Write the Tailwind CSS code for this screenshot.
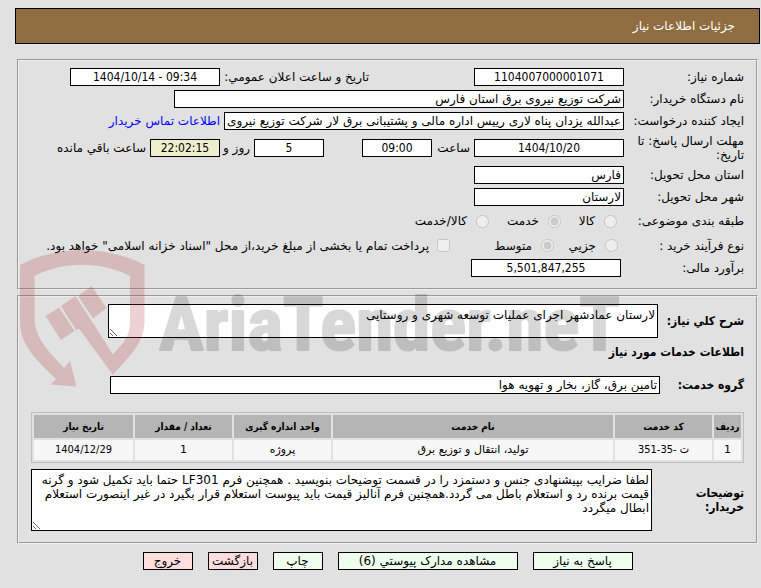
<!DOCTYPE html>
<html lang="fa" dir="rtl">

<head>
    <meta charset="UTF-8">
    <meta name="viewport" content="width=device-width, initial-scale=1.0">
    <title>جزئیات اطلاعات نیاز</title>
    <script src="https://cdn.jsdelivr.net/npm/@tailwindcss/browser@4"></script>
</head>

<body class="relative min-h-screen bg-[#e1e1e1] pt-2 pr-px pl-[15px] font-['DejaVu_Sans',sans-serif] text-[12px] leading-[14px] text-black">
    <!-- Title bar -->
    <header class="flex h-9 items-center border border-black bg-[#8f6d40] px-6 text-white">
        <h1>جزئیات اطلاعات نیاز</h1>
    </header>

    <main class="mt-[15px] mr-[2px] ml-[2px]">
        <!-- Need details -->
        <fieldset class="flex flex-col gap-1 border-2 border-[#eeeeee] pt-[7px] pr-3 pb-[11px] pl-6 [border-style:groove]">
            <div class="flex items-center">
                <label for="needNo" class="w-[120px] shrink-0">شماره نیاز:</label>
                <input id="needNo" type="text" readonly value="1104007000001071" class="h-[18px] w-[150px] border border-black bg-white px-0.5 text-center font-['DejaVu_Sans_Condensed',sans-serif]">
                <label for="announce" class="ms-[105px] w-[149px] shrink-0">تاریخ و ساعت اعلان عمومي:</label>
                <input id="announce" type="text" dir="ltr" readonly value="1404/10/14 - 09:34" class="h-[18px] w-[150px] border border-black bg-white px-0.5 text-center font-['DejaVu_Sans_Condensed',sans-serif]">
            </div>
            <div class="flex items-center">
                <label for="buyer" class="w-[120px] shrink-0">نام دستگاه خریدار:</label>
                <input id="buyer" type="text" readonly value="شرکت توزیع نیروی برق استان فارس" class="h-[18px] w-[450px] border border-black bg-white px-0.5">
            </div>
            <div class="flex items-center">
                <label for="creator" class="w-[120px] shrink-0">ایجاد کننده درخواست:</label>
                <input id="creator" type="text" readonly value="عبدالله یزدان پناه لاری رییس اداره مالی و پشتیبانی برق لار شرکت توزیع نیروی برق استان فارس" class="h-[18px] w-[400px] border border-black bg-white px-0.5">
                <a href="#" class="ms-1 whitespace-nowrap text-[#0000ff]">اطلاعات تماس خریدار</a>
            </div>
            <div class="flex h-7 items-center">
                <label for="deadline" class="w-[120px] shrink-0 pe-2">مهلت ارسال پاسخ: تا تاریخ:</label>
                <input id="deadline" type="text" readonly value="1404/10/20" class="h-[18px] w-[150px] border border-black bg-white px-0.5 text-center font-['DejaVu_Sans_Condensed',sans-serif]">
                <label for="deadlineHour" class="w-[42px] shrink-0 ps-1">ساعت</label>
                <input id="deadlineHour" type="text" readonly value="09:00" class="h-[18px] w-[70px] border border-black bg-white px-0.5 text-center font-['DejaVu_Sans_Condensed',sans-serif]">
                <input id="daysLeft" type="text" readonly value="5" class="ms-[38px] h-[18px] w-[70px] border border-black bg-white px-0.5 text-center font-['DejaVu_Sans_Condensed',sans-serif]">
                <label for="daysLeft" class="w-[34px] shrink-0 ps-1">روز و</label>
                <input id="timeLeft" type="text" readonly value="22:02:15" class="h-[18px] w-[70px] border border-black bg-[#eeeecc] px-0.5 text-center font-['DejaVu_Sans_Condensed',sans-serif]">
                <label for="timeLeft" class="ms-1 whitespace-nowrap">ساعت باقي مانده</label>
            </div>
            <div class="flex items-center">
                <label for="province" class="w-[120px] shrink-0">استان محل تحویل:</label>
                <input id="province" type="text" readonly value="فارس" class="h-[18px] w-[150px] border border-black bg-white px-0.5">
            </div>
            <div class="flex items-center">
                <label for="city" class="w-[120px] shrink-0">شهر محل تحویل:</label>
                <input id="city" type="text" readonly value="لارستان" class="h-[18px] w-[150px] border border-black bg-white px-0.5">
            </div>
            <div class="flex h-[22px] items-center">
                <span class="w-[127px] shrink-0">طبقه بندی موضوعی:</span>
                <div class="w-14 shrink-0"><label class="flex items-center gap-[9px]"><input type="radio" name="category" disabled class="size-[13px]">کالا</label></div>
                <div class="w-[72px] shrink-0"><label class="flex items-center gap-[9px]"><input type="radio" name="category" disabled checked class="size-[13px]">خدمت</label></div>
                <label class="flex items-center gap-[9px] whitespace-nowrap"><input type="radio" name="category" disabled class="size-[13px]">کالا/خدمت</label>
            </div>
            <div class="flex h-[19px] items-center">
                <span class="w-[126px] shrink-0">نوع فرآیند خرید :</span>
                <div class="w-16 shrink-0"><label class="flex items-center gap-[9px]"><input type="radio" name="process" disabled class="size-[13px]">جزیي</label></div>
                <div class="w-[104px] shrink-0"><label class="flex items-center gap-[9px]"><input type="radio" name="process" disabled checked class="size-[13px]">متوسط</label></div>
                <label class="flex items-center gap-2 whitespace-nowrap"><input type="checkbox" disabled class="size-[13px]">پرداخت تمام یا بخشی از مبلغ خرید،از محل "اسناد خزانه اسلامی" خواهد بود.</label>
            </div>
            <div class="flex items-center">
                <label for="estimate" class="w-[123px] shrink-0">برآورد مالی:</label>
                <input id="estimate" type="text" readonly value="5,501,847,255" class="h-[18px] w-[150px] border border-black bg-white px-0.5 text-center font-['DejaVu_Sans_Condensed',sans-serif]">
            </div>
        </fieldset>

        <!-- Description and services -->
        <fieldset class="mt-[5px] border-2 border-[#eeeeee] pt-[7px] pr-3 pb-[11px] pl-3 [border-style:groove]">
            <div class="flex items-center">
                <label for="summary" class="w-[86px] shrink-0 font-['DejaVu_Sans_Condensed',sans-serif] font-bold">شرح كلي نياز:</label>
                <textarea id="summary" readonly class="h-[34px] w-[550px] resize overflow-hidden border border-black bg-white px-0.5 py-[3px]">لارستان عمادشهر اجرای عملیات توسعه شهری و روستایی</textarea>
            </div>
            <h2 class="mt-[7px] font-['DejaVu_Sans_Condensed',sans-serif] font-bold">اطلاعات خدمات مورد نیاز</h2>
            <div class="mt-[17px] flex items-center">
                <label for="group" class="w-[84px] shrink-0 font-['DejaVu_Sans_Condensed',sans-serif] font-bold">گروه خدمت:</label>
                <input id="group" type="text" readonly value="تامین برق، گاز، بخار و تهویه هوا" class="h-[18px] w-[550px] border border-black bg-white px-0.5">
            </div>

            <table class="mt-[18px] w-full table-fixed border-separate border-spacing-0.5 border border-[#bebebe] text-center text-[11px]">
                <thead>
                    <tr class="h-[23px] bg-[#b5b5b5] font-['DejaVu_Sans_Condensed',sans-serif] text-[10px]">
                        <th class="w-[27px]">ردیف</th>
                        <th class="w-[97px]">کد خدمت</th>
                        <th>نام خدمت</th>
                        <th class="w-[97px]">واحد اندازه گیری</th>
                        <th class="w-[97px]">تعداد / مقدار</th>
                        <th class="w-[99px]">تاریخ نیاز</th>
                    </tr>
                </thead>
                <tbody>
                    <tr class="h-5 bg-[#f7f7f7]">
                        <td class="p-0">1</td>
                        <td class="p-0 font-['DejaVu_Sans_Condensed',sans-serif]">ت -35-351</td>
                        <td class="p-0">تولید، انتقال و توزیع برق</td>
                        <td class="p-0">پروژه</td>
                        <td class="p-0">1</td>
                        <td class="p-0 font-['DejaVu_Sans_Condensed',sans-serif]">1404/12/29</td>
                    </tr>
                </tbody>
            </table>

            <div class="mt-[6px] flex items-center">
                <label for="notes" class="w-[92px] shrink-0 pe-6 font-['DejaVu_Sans_Condensed',sans-serif] font-bold">توضیحات خریدار:</label>
                <textarea id="notes" readonly class="h-[62px] grow resize overflow-hidden border border-black bg-white px-0.5 py-[3px]">لطفا ضرایب بپیشنهادی جنس و دستمزد را در قسمت توضیحات بنویسید . همچنین فرم LF301 حتما باید تکمیل شود و گرنه قیمت برنده رد و استعلام باطل می گردد.همچنین فرم آنالیز قیمت باید پیوست استعلام قرار بگیرد در غیر اینصورت استعلام ابطال میگردد</textarea>
            </div>
        </fieldset>
    </main>

    <!-- Actions -->
    <div class="mt-2 flex justify-center gap-[15px]">
        <button type="button" class="h-[18px] w-[100px] border border-black bg-[#eeffee]">پاسخ به نیاز</button>
        <button type="button" class="h-[18px] w-[180px] border border-black bg-[#eeffee]">مشاهده مدارک پیوستي (6)</button>
        <button type="button" class="h-[18px] w-[50px] border border-black bg-[#eeffee]">چاپ</button>
        <button type="button" class="h-[18px] w-[50px] border border-black bg-[#ffdddd]">بازگشت</button>
        <button type="button" class="h-[18px] w-[50px] border border-black bg-[#ffdddd]">خروج</button>
    </div>

    <!-- Watermark -->
    <svg class="pointer-events-none absolute top-[248px] left-4 h-[142px] w-[608px]" viewBox="16 248 608 142" direction="ltr" aria-hidden="true">
        <g fill="#b43434" opacity="0.22">
            <path d="M20 265C58 245 106 245 144.500 265V322C144 345 127 358 113 375L79 328.500L76 330L61 306L75.500 296L91 320L113 354.500C121 345 130 338 130 322V276C100 261 64 261 34.500 276V318C35 340 50 352 64 368L70 361L76.500 386.500L50.500 384.500L56 379C39 362 20 347 20 322Z" />
            <path d="M45.500 316L59 307.500L74.500 331L61 340Z" />
            <path d="M78 296L91.500 286L106.500 308L93 318.500Z" />
        </g>
        <g opacity="0.15">
            <text x="159" y="350" fill="#000" stroke="#000" stroke-width="2" stroke-linejoin="round" font-family="Roboto Condensed, Open Sans Condensed, Noto Sans Condensed, Roboto" font-weight="700" font-size="75">AriaTender.neT</text>
        </g>
    </svg>
</body>

</html>
